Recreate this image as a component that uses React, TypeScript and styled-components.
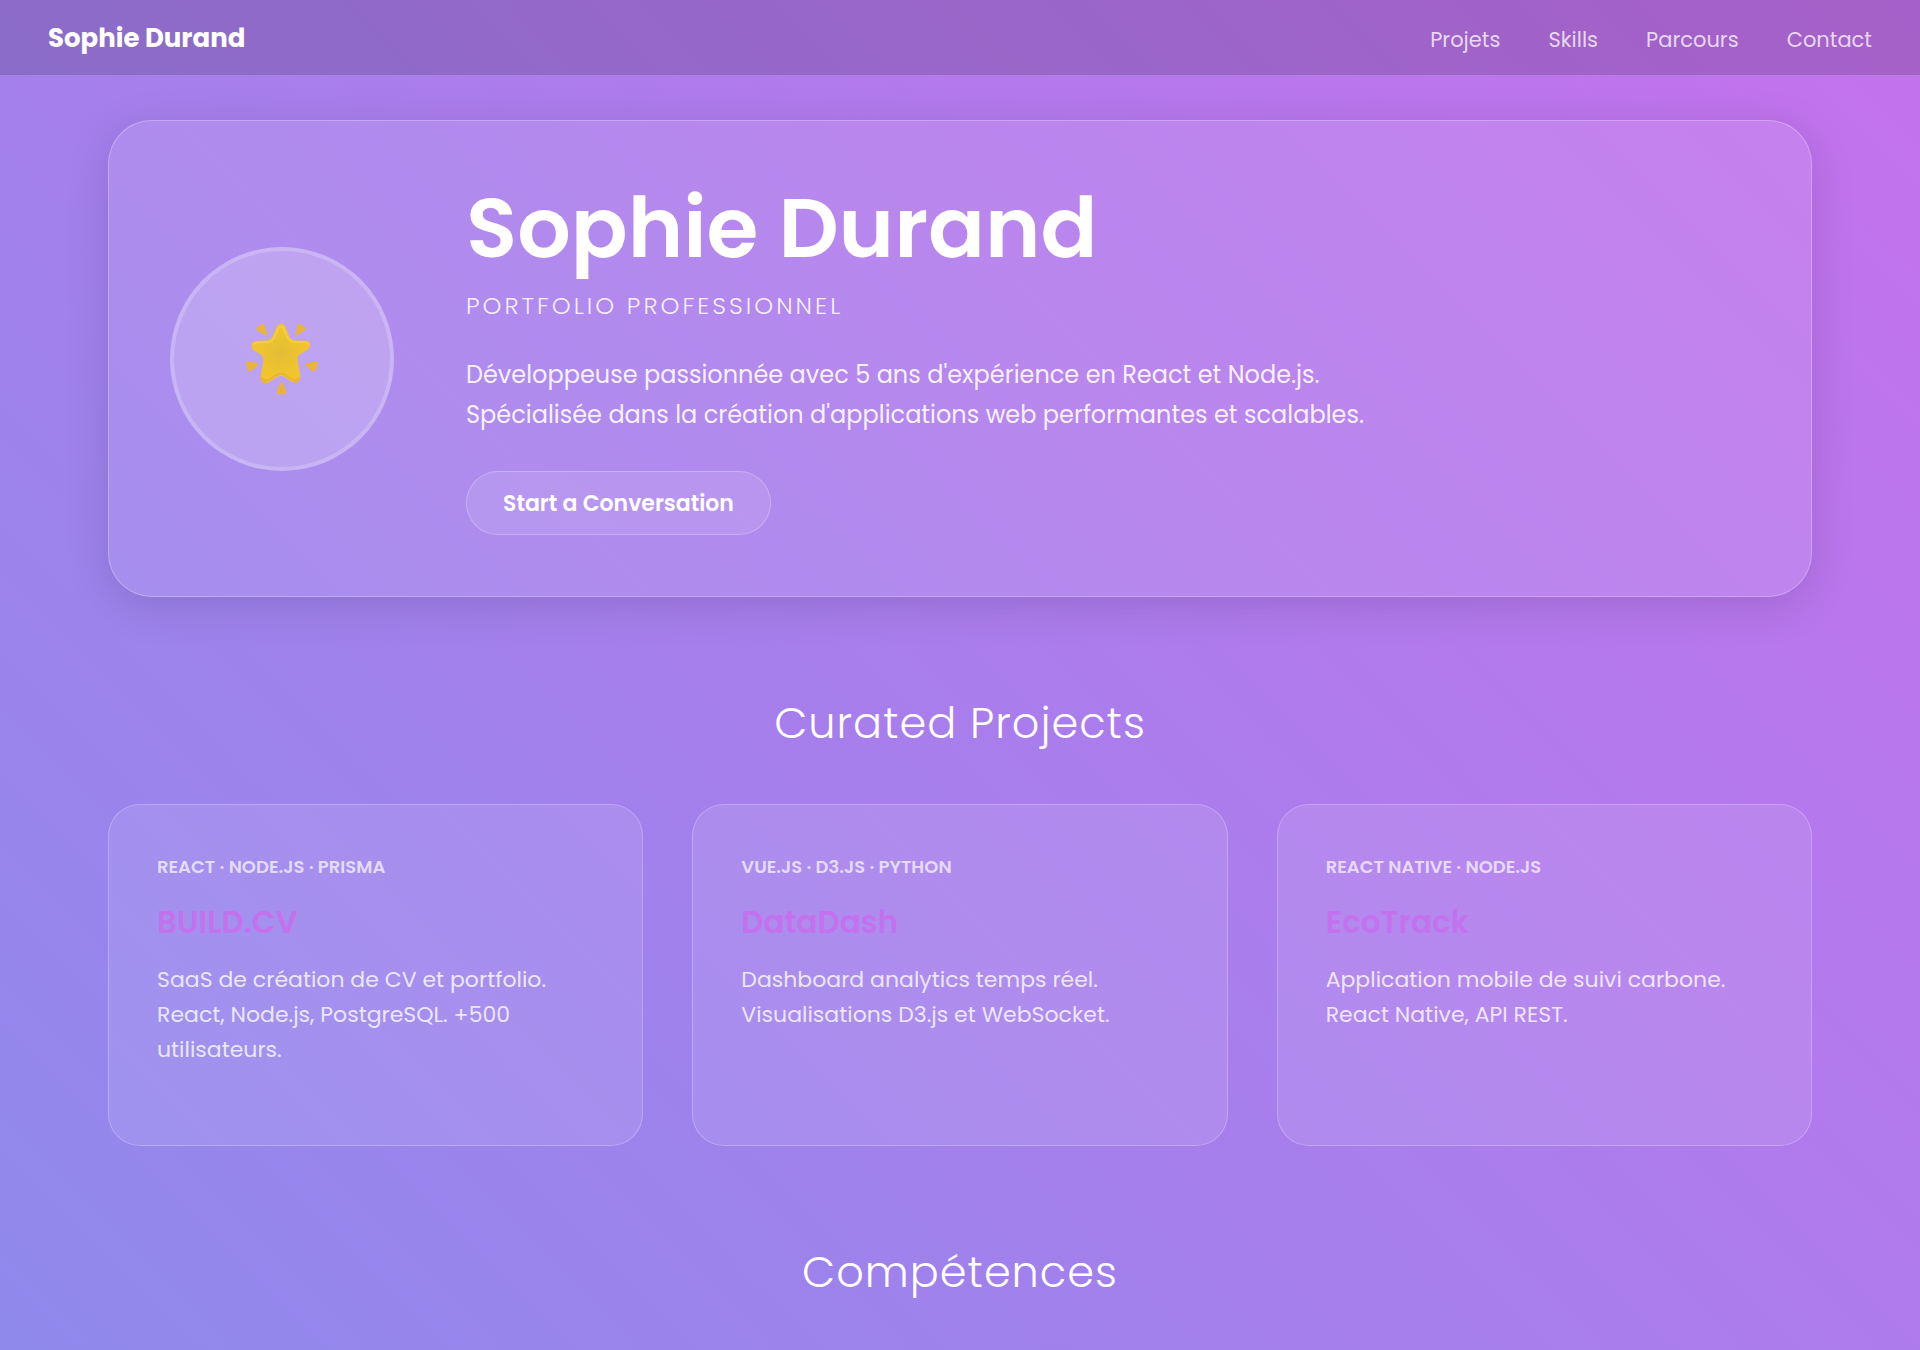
import React from 'react';
import styled, { createGlobalStyle } from 'styled-components';

const GlobalStyle = createGlobalStyle`
  *, *::before, *::after { box-sizing: border-box; }
  body {
    margin: 0;
    color: #fff;
    font-family: Poppins, Inter, "Liberation Sans", sans-serif;
    background: #a57fec;
  }
  h1, h2, h3, p { margin: 0; }
`;

const Page = styled.div`
  min-height: 100vh;
  background: linear-gradient(45deg, #8f89ec, #c471ed);
`;

const NavBar = styled.header`
  display: flex;
  align-items: center;
  justify-content: space-between;
  height: 76px;
  padding: 0 48px;
  background: rgba(0, 0, 0, 0.15);
  border-bottom: 1px solid rgba(255, 255, 255, 0.2);
`;

const Brand = styled.a`
  padding-top: 1px;
  color: #fff;
  font-size: 26px;
  font-weight: 700;
  line-height: 40px;
  text-decoration: none;
`;

const NavLinks = styled.nav`
  display: flex;
  gap: 48px;
  padding-top: 4px;
`;

const NavLink = styled.a`
  color: rgba(255, 255, 255, 0.75);
  font-size: 21px;
  line-height: 32px;
  text-decoration: none;
`;

const Main = styled.main`
  padding: 44px 108px 0;
`;

const Hero = styled.section`
  display: flex;
  align-items: center;
  gap: 72px;
  padding: 61px;
  background: rgba(255, 255, 255, 0.1);
  border: 1px solid rgba(255, 255, 255, 0.27);
  border-radius: 44px;
  box-shadow: 0 9px 44px rgba(0, 0, 0, 0.13);
`;

const Avatar = styled.div`
  display: flex;
  flex: none;
  align-items: center;
  justify-content: center;
  width: 224px;
  height: 224px;
  background: rgba(255, 255, 255, 0.2);
  border: 4px solid rgba(255, 255, 255, 0.2);
  border-radius: 50%;
`;

const HeroTitle = styled.h1`
  font-size: 84px;
  font-weight: 600;
  line-height: 92px;
`;

const HeroSubtitle = styled.p`
  margin-top: 12px;
  color: rgba(255, 255, 255, 0.9);
  font-size: 24px;
  font-weight: 300;
  line-height: 40px;
  letter-spacing: 3px;
  text-transform: uppercase;
`;

const HeroText = styled.p`
  max-width: 960px;
  margin-top: 29px;
  color: rgba(255, 255, 255, 0.9);
  font-size: 24px;
  line-height: 40px;
`;

const HeroButton = styled.button`
  margin-top: 36px;
  height: 64px;
  padding: 0 36px;
  color: #fff;
  font: inherit;
  font-size: 22px;
  font-weight: 600;
  background: rgba(255, 255, 255, 0.1);
  border: 1px solid rgba(255, 255, 255, 0.24);
  border-radius: 32px;
  cursor: pointer;
`;

const Section = styled.section`
  padding-top: 95px;
`;

const SectionTitle = styled.h2`
  font-size: 43px;
  font-weight: 300;
  line-height: 62px;
  letter-spacing: 1px;
  text-align: center;
`;

const CardGrid = styled.div`
  display: grid;
  grid-template-columns: repeat(3, 1fr);
  gap: 49px;
  margin-top: 50px;
`;

const Card = styled.article`
  min-height: 342px;
  padding: 48px;
  background: rgba(255, 255, 255, 0.1);
  border: 1px solid rgba(255, 255, 255, 0.24);
  border-radius: 32px;
`;

const CardTag = styled.p`
  color: rgba(255, 255, 255, 0.7);
  font-size: 18px;
  font-weight: 600;
  line-height: 28px;
  text-transform: uppercase;
`;

const CardTitle = styled.h3`
  margin-top: 19px;
  color: #c471ed;
  font-size: 31px;
  font-weight: 600;
  line-height: 44px;
`;

const CardText = styled.p`
  margin-top: 18px;
  color: rgba(255, 255, 255, 0.8);
  font-size: 22px;
  line-height: 35px;
`;

const StarIcon = () => (
  <svg width="72" height="72" viewBox="0 0 214 212" role="img" aria-label="Étoile">
    <defs>
      <radialGradient id="star-body" cx="0.5" cy="0.5" r="0.62">
        <stop offset="0" stopColor="#e2bd35" />
        <stop offset="0.5" stopColor="#edc42f" />
        <stop offset="0.8" stopColor="#f4c32d" />
        <stop offset="1" stopColor="#e5a93a" />
      </radialGradient>
      <linearGradient id="star-ray" x1="0" y1="0" x2="0" y2="1">
        <stop offset="0" stopColor="#f2c23a" />
        <stop offset="1" stopColor="#e2a83c" />
      </linearGradient>
    </defs>
    <path
      d="M104 1C112 1 116 6 119 15L128 36C132 46 138 50 149 51L176 52C188 52 193 60 190 69C188 75 182 79 175 83L162 91C154 97 152 102 154 111L161 153C163 165 159 174 151 176C144 178 137 174 129 169L114 159C107 155 101 155 94 159L76 170C67 176 60 179 53 177C44 174 42 167 44 155L51 116C53 105 51 98 43 92L26 82C17 76 14 69 17 62C19 55 25 53 34 52L60 51C71 50 76 46 80 36L89 15C92 6 97 1 104 1Z"
      fill="url(#star-body)"
    />
    <path
      d="M23 61C25 56 31 57 38 57L64 56C76 55 81 50 86 38L95 17C99 7 108 7 112 17L121 38C126 50 132 55 146 56L174 57C180 57 184 58 185 63"
      fill="none"
      stroke="#f9d54b"
      strokeWidth="5"
      strokeLinecap="round"
      opacity="0.65"
    />
    <path
      d="M50 166C55 174 67 169 76 163L93 153C101 149 108 149 116 153L131 163C140 169 151 174 155 165"
      fill="none"
      stroke="#dda52d"
      strokeWidth="5"
      strokeLinecap="round"
      opacity="0.45"
    />
    <g fill="url(#star-ray)" stroke="#eab536" strokeWidth="9" strokeLinejoin="round">
      <path d="M35 17L50 6L59 31Z" />
      <path d="M158 6L173 16L151 31L152 31Z" />
      <path d="M5 117L31 122L13 138L9 137Z" />
      <path d="M209 117L182 123L199 138L204 137Z" />
      <path d="M106 179L116 206L95 206Z" />
    </g>
  </svg>
);

const links = [
  { label: 'Projets', href: '#projets' },
  { label: 'Skills', href: '#skills' },
  { label: 'Parcours', href: '#parcours' },
  { label: 'Contact', href: '#contact' },
];

const projects = [
  {
    tag: 'React · Node.js · Prisma',
    title: 'BUILD.CV',
    text: 'SaaS de création de CV et portfolio. React, Node.js, PostgreSQL. +500 utilisateurs.',
  },
  {
    tag: 'Vue.js · D3.js · Python',
    title: 'DataDash',
    text: 'Dashboard analytics temps réel. Visualisations D3.js et WebSocket.',
  },
  {
    tag: 'React Native · Node.js',
    title: 'EcoTrack',
    text: 'Application mobile de suivi carbone. React Native, API REST.',
  },
];

export default function App() {
  return (
    <>
      <GlobalStyle />
      <Page>
        <NavBar>
          <Brand href="#accueil">Sophie Durand</Brand>
          <NavLinks>
            {links.map((link) => (
              <NavLink key={link.href} href={link.href}>
                {link.label}
              </NavLink>
            ))}
          </NavLinks>
        </NavBar>
        <Main>
          <Hero id="accueil">
            <Avatar>
              <StarIcon />
            </Avatar>
            <div>
              <HeroTitle>Sophie Durand</HeroTitle>
              <HeroSubtitle>Portfolio professionnel</HeroSubtitle>
              <HeroText>
                Développeuse passionnée avec 5 ans d'expérience en React et Node.js. Spécialisée
                dans la création d'applications web performantes et scalables.
              </HeroText>
              <HeroButton type="button">Start a Conversation</HeroButton>
            </div>
          </Hero>
          <Section id="projets">
            <SectionTitle>Curated Projects</SectionTitle>
            <CardGrid>
              {projects.map((project) => (
                <Card key={project.title}>
                  <CardTag>{project.tag}</CardTag>
                  <CardTitle>{project.title}</CardTitle>
                  <CardText>{project.text}</CardText>
                </Card>
              ))}
            </CardGrid>
          </Section>
          <Section id="skills">
            <SectionTitle>Compétences</SectionTitle>
          </Section>
        </Main>
      </Page>
    </>
  );
}
